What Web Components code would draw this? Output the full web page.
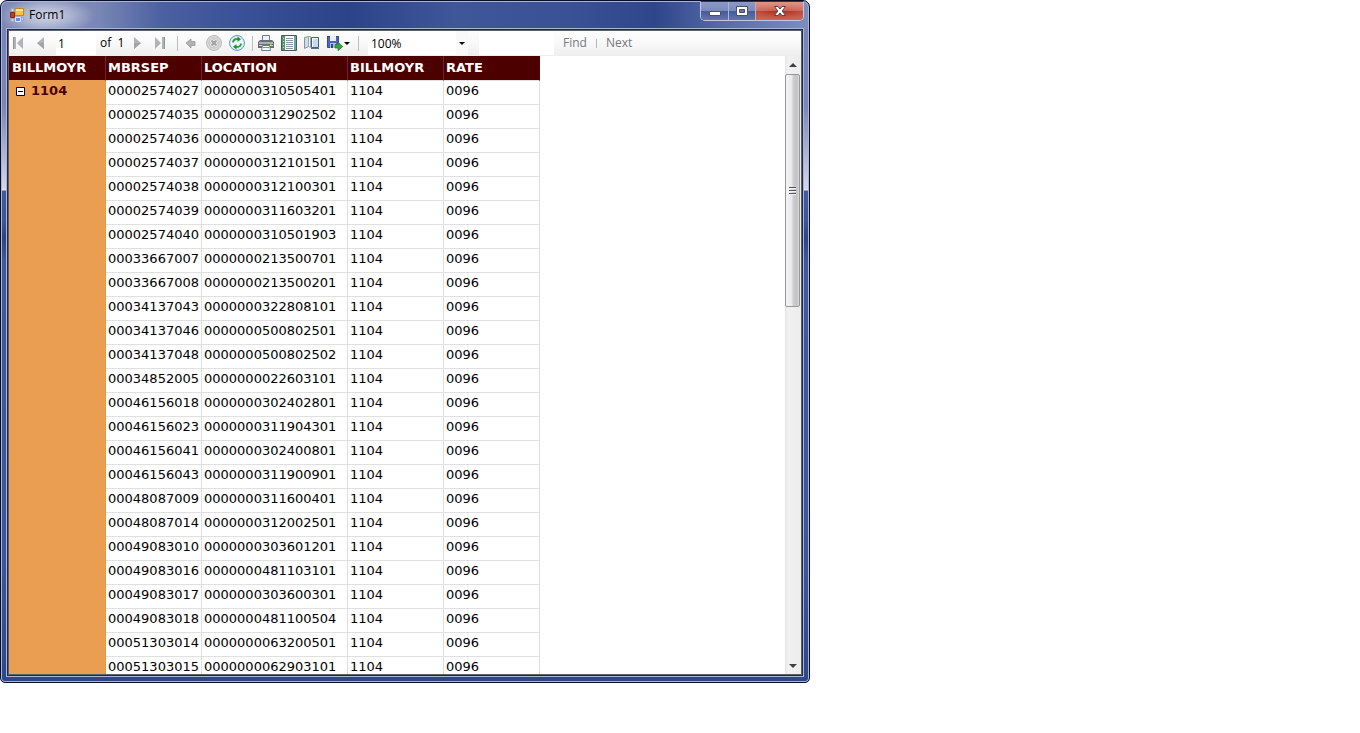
<!DOCTYPE html>
<html lang="en">
<head>
<meta charset="utf-8">
<title>Form1</title>
<style>
html, body { margin: 0; height: 100%; background: #fff; }
body { display: grid; grid-template-columns: 81fr 55fr; font-family: "Open Sans", "Noto Sans", sans-serif; font-size: 12px; color: #000; overflow: hidden; }
app-window { height: calc(100vh - 50px); }
</style>
</head>
<body>
<app-window caption="Form1">
  <report-toolbar slot="toolbar"></report-toolbar>
  <report-table></report-table>
  <scroll-bar></scroll-bar>
</app-window>
<script>
const define = (name, html, setup) => {
  const tpl = document.createElement('template');
  tpl.innerHTML = html;
  customElements.define(name, class extends HTMLElement {
    constructor() {
      super();
      this.attachShadow({ mode: 'open' }).append(tpl.content.cloneNode(true));
    }
    connectedCallback() { if (setup) setup(this, this.shadowRoot); }
  });
};

/* Toolbar and caption glyphs, keyed by name */
const glyphs = {
  first: '<path d="M3 2h3v12H3zM13 2v12L7 8z" fill="#b2b3b5"/><path d="M3 2h1v12H3z" fill="#929395"/>',
  prev: '<path d="M11 2v12L4 8z" fill="#b2b3b5"/><path d="M11 8v6L4 8z" fill="#a2a3a5"/>',
  next: '<path d="M5 2v12l7-6z" fill="#b2b3b5"/><path d="M5 8v6l7-6z" fill="#a2a3a5"/>',
  last: '<path d="M10 2h3v12h-3zM3 2v12l6-6z" fill="#b2b3b5"/><path d="M12 2h1v12h-1z" fill="#929395"/>',
  back: '<path d="M3 8l5-4v2.500h4v4H8V13z" fill="#b4b4b4" stroke="#969696" stroke-width=".8"/>',
  stop: '<circle cx="8" cy="8" r="7.500" fill="#d8d8d8" stroke="#bbb"/><circle cx="8" cy="8" r="5.500" fill="#cacaca"/><path d="M5 5l6 6m0-6l-6 6" stroke="#ececec" stroke-width="3.500"/><path d="M5.500 5.500l5 5m0-5l-5 5" stroke="#a0a0a0" stroke-width="1.800"/>',
  refresh: '<circle cx="8" cy="8" r="7.500" fill="#d0e4f8" stroke="#6c9fd6"/><circle cx="8" cy="8" r="6" fill="#f3f9fe"/><path d="M4 7.500c.3-2.500 2-3.500 4-3.500h1" fill="none" stroke="#2f9e36" stroke-width="2"/><path d="M8.500 1.500L12 4.300 8.500 7z" fill="#23922c"/><path d="M12 8.500c-.3 2.500-2 3.500-4 3.500H7" fill="none" stroke="#2f9e36" stroke-width="2"/><path d="M7.500 9L4 11.800 7.500 14.500z" fill="#23922c"/>',
  print: '<path d="M4.500 .5h7v6h-7z" fill="#eef4fa" stroke="#727b88"/><path d="M0 7l2-2h12l2 2v6H0z" fill="#676d78"/><path d="M1 7h14v2H1z" fill="#aab0b9"/><path d="M1 10h14v1H1z" fill="#d2d6dc"/><path d="M4.500 10.500h7l1 5h-9z" fill="#f4f9ff" stroke="#687b97"/><path d="M5 12h6v1H5z" fill="#6594cf"/><path d="M12 9h2v1h-2z" fill="#6dbd54"/>',
  layout: '<path d="M.5 .5h15v15H.5z" fill="#fff" stroke="#4c5663"/><path d="M1 1h3v14H1z" fill="#4e9c66"/><path d="M13 1h2v14h-2z" fill="#67ac7c"/><path d="M5 3.500h7M5 5.500h7M5 7.500h7M5 9.500h7M5 11.500h7M5 13.500h7" stroke="#8a98ad" stroke-width="1"/><path d="M2 3.500h1M2 6.500h1M2 9.500h1M2 12.500h1" stroke="#c4e2ca"/>',
  setup: '<path d="M.5 2.500l4-1v10l-4 2z" fill="#cfdaea" stroke="#8590a3"/><path d="M4.500 1.500h2v11l-2-1z" fill="#f5f8fc" stroke="#98a3b5"/><path d="M7.500 2.500h7v10h-7z" fill="#f6faff" stroke="#405f8c"/><path d="M9 4h5v8H9z" fill="#c8daee"/><path d="M7 13.500h8" stroke="#5f718e"/>',
  save: '<path d="M0 1h12v12H1l-1-1z" fill="#4964be"/><path d="M.5 1.500h11v11H.5z" fill="none" stroke="#354a94"/><path d="M3 1h6v5H3z" fill="#e9eefb"/><path d="M3 8h6v5H3z" fill="#b5bfdc"/><path d="M4 9h2v4H4z" fill="#344783"/><path d="M8 9.500h3V7l4.700 4.500L11 15.700V13H8z" fill="#36a341" stroke="#1e7e2c" stroke-width=".7"/>'
};

define('tool-button', `
<style>
:host { display: block; }
button { display: flex; align-items: center; margin: 0; padding: 0; border: 0; background: none; height: 20px; }
svg { display: block; }
.drop { display: none; }
:host([menu]) .drop { display: block; }
</style>
<button type="button"><svg class="glyph" width="16" height="16" viewBox="0 0 16 16"></svg><svg class="drop" width="8" height="8" viewBox="0 0 8 8"><path d="M1 3h6L4 6z" fill="#000"/></svg></button>`,
(el, root) => {
  root.querySelector('.glyph').innerHTML = glyphs[el.getAttribute('icon')];
  root.querySelector('button').setAttribute('aria-label', el.getAttribute('label'));
});

define('tool-divider', `
<style>:host { display: block; width: 1px; height: 15px; background: #bcbec0; margin: 0 5px 0 7px; }</style>`);

define('report-toolbar', `
<style>
:host { display: flex; align-items: center; box-sizing: border-box; height: 25px; padding-bottom: 1px; background: linear-gradient(#fdfdfd, #f8f8f8 50%, #eee); white-space: nowrap; overflow: hidden; }
.group { display: flex; gap: 7px; align-items: center; }
.start { padding-left: 1px; }
.pages { margin-right: 2px; }
input, select { box-sizing: border-box; margin: 0; border: 0; border-radius: 0; padding: 0 3px; height: 24px; background: #fff; font: 12px "Open Sans", "Noto Sans", sans-serif; color: #000; outline: 0; }
.page { width: 40px; padding: 0 2px; }
.search { width: 75px; margin: 0 9px 0 11px; }
.count { width: 29px; padding-left: 4px; line-height: 24px; }
.zoom { display: grid; width: 100px; margin-left: 4px; background: #fff; }
.zoom select, .zoom svg { grid-area: 1 / 1; }
.zoom select { appearance: none; width: 100%; background: linear-gradient(#f9f9f9, #f9f9f9) right / 12px 100% no-repeat #fff; }
.zoom svg { justify-self: end; align-self: center; margin-right: 2px; pointer-events: none; }
a { color: #77797c; text-decoration: none; line-height: 24px; }
.find { display: flex; align-items: center; }
.find i { width: 1px; height: 9px; background: #b4b6b8; margin: 0 9px; }
</style>
<div class="group start">
  <tool-button icon="first" label="First Page"></tool-button>
  <tool-button icon="prev" label="Previous Page"></tool-button>
  <input class="page" aria-label="Current Page" value="1">
</div>
<span class="count">of&nbsp; 1</span>
<div class="group pages">
  <tool-button icon="next" label="Next Page"></tool-button>
  <tool-button icon="last" label="Last Page"></tool-button>
</div>
<tool-divider></tool-divider>
<div class="group">
  <tool-button icon="back" label="Back to Parent Report"></tool-button>
  <tool-button icon="stop" label="Stop Rendering"></tool-button>
  <tool-button icon="refresh" label="Refresh"></tool-button>
</div>
<tool-divider></tool-divider>
<div class="group">
  <tool-button icon="print" label="Print"></tool-button>
  <tool-button icon="layout" label="Print Layout"></tool-button>
  <tool-button icon="setup" label="Page Setup"></tool-button>
  <tool-button icon="save" label="Export" menu></tool-button>
</div>
<tool-divider></tool-divider>
<div class="zoom"><select aria-label="Zoom"><option>100%</option></select><svg width="8" height="8" viewBox="0 0 8 8"><path d="M1 3h6L4 6z" fill="#000"/></svg></div>
<input class="search" aria-label="Find Text in Report">
<div class="find"><a href="#find">Find</a><i></i><a href="#next">Next</a></div>`);

define('caption-button', `
<style>
:host { display: block; flex: 0 0 auto; }
button { display: grid; place-items: center; box-sizing: border-box; width: 27px; height: 18px; margin: 0; padding: 0; border: 0; border-right: 1px solid #aab4d6; background: linear-gradient(#8d9ac6, #7a8abb 48%, #465a96 50%, #6175b0); }
svg { display: block; }
:host([kind=minimize]) button { width: 28px; }
:host([kind=close]) button { width: 47px; border-right: 0; background: radial-gradient(closest-side, #b0281400, #d8908655) , linear-gradient(#dc9a90, #c9594c 48%, #ac2a1c 50%, #c8503c); }
</style>
<button type="button"><svg width="14" height="12" viewBox="0 0 14 12"></svg></button>`,
(el, root) => {
  const kind = el.getAttribute('kind');
  root.querySelector('button').setAttribute('aria-label', kind);
  root.querySelector('svg').innerHTML = {
    minimize: '<path d="M1.500 6.500h11v4h-11z" fill="#fff" stroke="#4b5067"/>',
    maximize: '<path d="M1.500 1.500h11v9h-11z" fill="#fff" stroke="#4b5067"/><path d="M4.500 4.500h5v3h-5z" fill="#63749f" stroke="#4b5067"/>',
    close: '<path d="M1.500 1.500h3.500l2 2.500 2-2.500h3.500L9.200 6l3.300 4.500H9L7 8l-2 2.500H1.500L4.800 6z" fill="#fff" stroke="#5b4048"/>'
  }[kind];
});

define('app-window', `
<style>
:host {
  display: flex; flex-direction: column; box-sizing: border-box; min-width: 0;
  border: 1px solid #070d26; border-radius: 7px 7px 5px 5px; padding: 0 5px 5px;
  box-shadow: inset 0 0 0 1px #a9b6dc;
  background:
    radial-gradient(ellipse 48px 18px at 46px 15px, #ffffff99, #ffffff55 50%, #ffffff00) top / 100% 28px no-repeat,
    linear-gradient(90deg, #7c87b4, #8b95be 5%, #7a87b6 12%, #4a60a0 20%, #3a5097 30%, #2b4388 43%, #3f5799 56%, #3a5195 70%, #2f468b 81%, #5a6dab 90%, #7e8dbd) top / 100% 28px no-repeat,
    linear-gradient(#7a83b3 28px, #7c85b5 105px, #d5d7e6 187px, #e4e4ec 189px, #43599d 190px, #3f5599 220px, #30447f 237px, #42589c 260px, #3e559b 560px, #2f4789 100%);
}
.title { display: flex; align-items: flex-start; height: 27px; padding-left: 4px; }
.title svg { margin-top: 7px; }
h1 { flex: 1; margin: 0; padding: 4px 0 0 5px; font-size: 12px; font-weight: 400; line-height: 20px; }
.buttons { display: flex; border: 1px solid #c0c8e2; border-top-color: #2a3358; border-radius: 0 0 5px 5px; overflow: hidden; }
.client { flex: 1; min-height: 0; display: flex; flex-direction: column; border: 1px solid #5b6168; outline: 1px solid #202a48; box-shadow: 0 0 0 2px #aab5da; margin: 2px; background: #fff; }
.body { flex: 1; min-height: 0; display: flex; justify-content: space-between; overflow: hidden; }
</style>
<header class="title">
  <svg width="14" height="14" viewBox="0 0 14 14"><path d="M5 .5h8.500v7H5z" fill="#f6c63b" stroke="#b98b22"/><path d="M6 1h7v2H6z" fill="#fde58b"/><path d="M.5 4.500h4v5h-4z" fill="#c63a22" stroke="#8c2417"/><path d="M1 .5h3v3H1zM1 10.500h3v3H1zM11.500 9.500h2v3h-2z" fill="#ced3dd" stroke="#9ba4b8"/><path d="M5.500 9.500h5v4h-5z" fill="#5a92dc" stroke="#e0e7f4"/></svg>
  <h1></h1>
  <div class="buttons"><caption-button kind="minimize"></caption-button><caption-button kind="maximize"></caption-button><caption-button kind="close"></caption-button></div>
</header>
<main class="client"><slot name="toolbar"></slot><div class="body"><slot></slot></div></main>`,
(el, root) => { root.querySelector('h1').textContent = el.getAttribute('caption'); });

define('scroll-bar', `
<style>
:host { display: flex; flex-direction: column; flex: 0 0 16px; background: linear-gradient(90deg, #e6e6e6, #f1f1f1 20%, #ededed); }
button { display: grid; place-items: center; height: 17px; padding: 0; border: 0; background: none; }
.track { flex: 1; padding-top: 1px; }
.thumb { box-sizing: border-box; height: 40%; width: 15px; display: grid; place-items: center; border: 1px solid #979797; border-radius: 2px; background: linear-gradient(90deg, #f5f5f5, #e9e9eb 45%, #cfcfd2 55%, #c2c2c6 85%, #dedede); }
</style>
<button type="button" aria-label="Scroll up"><svg width="8" height="4" viewBox="0 0 8 4"><path d="M0 4l4-4 4 4z" fill="#404040"/></svg></button>
<div class="track"><div class="thumb"><svg width="7" height="8" viewBox="0 0 7 8"><path d="M0 0h7v1H0zM0 3h7v1H0zM0 6h7v1H0z" fill="#50535a"/><path d="M0 1h7v1H0zM0 4h7v1H0zM0 7h7v1H0z" fill="#f4f4f4"/></svg></div></div>
<button type="button" aria-label="Scroll down"><svg width="8" height="4" viewBox="0 0 8 4"><path d="M0 0h8L4 4z" fill="#404040"/></svg></button>`);

const rows = `00002574027 0000000310505401
00002574035 0000000312902502
00002574036 0000000312103101
00002574037 0000000312101501
00002574038 0000000312100301
00002574039 0000000311603201
00002574040 0000000310501903
00033667007 0000000213500701
00033667008 0000000213500201
00034137043 0000000322808101
00034137046 0000000500802501
00034137048 0000000500802502
00034852005 0000000022603101
00046156018 0000000302402801
00046156023 0000000311904301
00046156041 0000000302400801
00046156043 0000000311900901
00048087009 0000000311600401
00048087014 0000000312002501
00049083010 0000000303601201
00049083016 0000000481103101
00049083017 0000000303600301
00049083018 0000000481100504
00051303014 0000000063200501
00051303015 0000000062903101`.split('\n').map(line => line.split(' '));

define('report-table', `
<style>
:host { display: block; font-family: "DejaVu Sans", Verdana, sans-serif; font-size: 13px; }
table { table-layout: fixed; width: 531px; border-collapse: separate; border-spacing: 0; }
th, td { box-sizing: border-box; padding: 0 0 0 2px; text-align: left; vertical-align: top; white-space: nowrap; border: solid #e0e0e0; border-width: 0 1px 1px 0; }
td { height: 24px; line-height: 20px; }
thead th { height: 25px; line-height: 23px; color: #fff; background: #4d0000; border-right-color: #6b2525; }
thead th:first-child { border-bottom-color: #e99e51; }
thead th:last-child { border-right-color: #4d0000; }
th:first-child { padding-left: 3px; }
tbody th { color: #4d0000; background: #e99e51; border-color: #e2964a; line-height: 20px; }
.group { display: flex; align-items: center; gap: 6px; padding-left: 4px; }
button { display: block; margin: 0; padding: 0; border: 0; background: none; }
svg { display: block; }
</style>
<table>
<colgroup><col style="width:97px"><col style="width:96px"><col style="width:146px"><col style="width:96px"><col style="width:96px"></colgroup>
<thead><tr><th scope="col">BILLMOYR</th><th scope="col">MBRSEP</th><th scope="col">LOCATION</th><th scope="col">BILLMOYR</th><th scope="col">RATE</th></tr></thead>
<tbody></tbody>
</table>`,
(el, root) => {
  const group = `<th scope="rowgroup" rowspan="${rows.length}"><div class="group"><button type="button" aria-label="Collapse group"><svg width="9" height="9" viewBox="0 0 9 9"><path d="M.5.5h8v8h-8z" fill="#fff" stroke="#000"/><path d="M2 4h5v1H2z"/></svg></button>1104</div></th>`;
  root.querySelector('tbody').innerHTML = rows.map(([member, location], i) =>
    `<tr>${i ? '' : group}<td>${member}</td><td>${location}</td><td>1104</td><td>0096</td></tr>`).join('');
});
</script>
</body>
</html>
